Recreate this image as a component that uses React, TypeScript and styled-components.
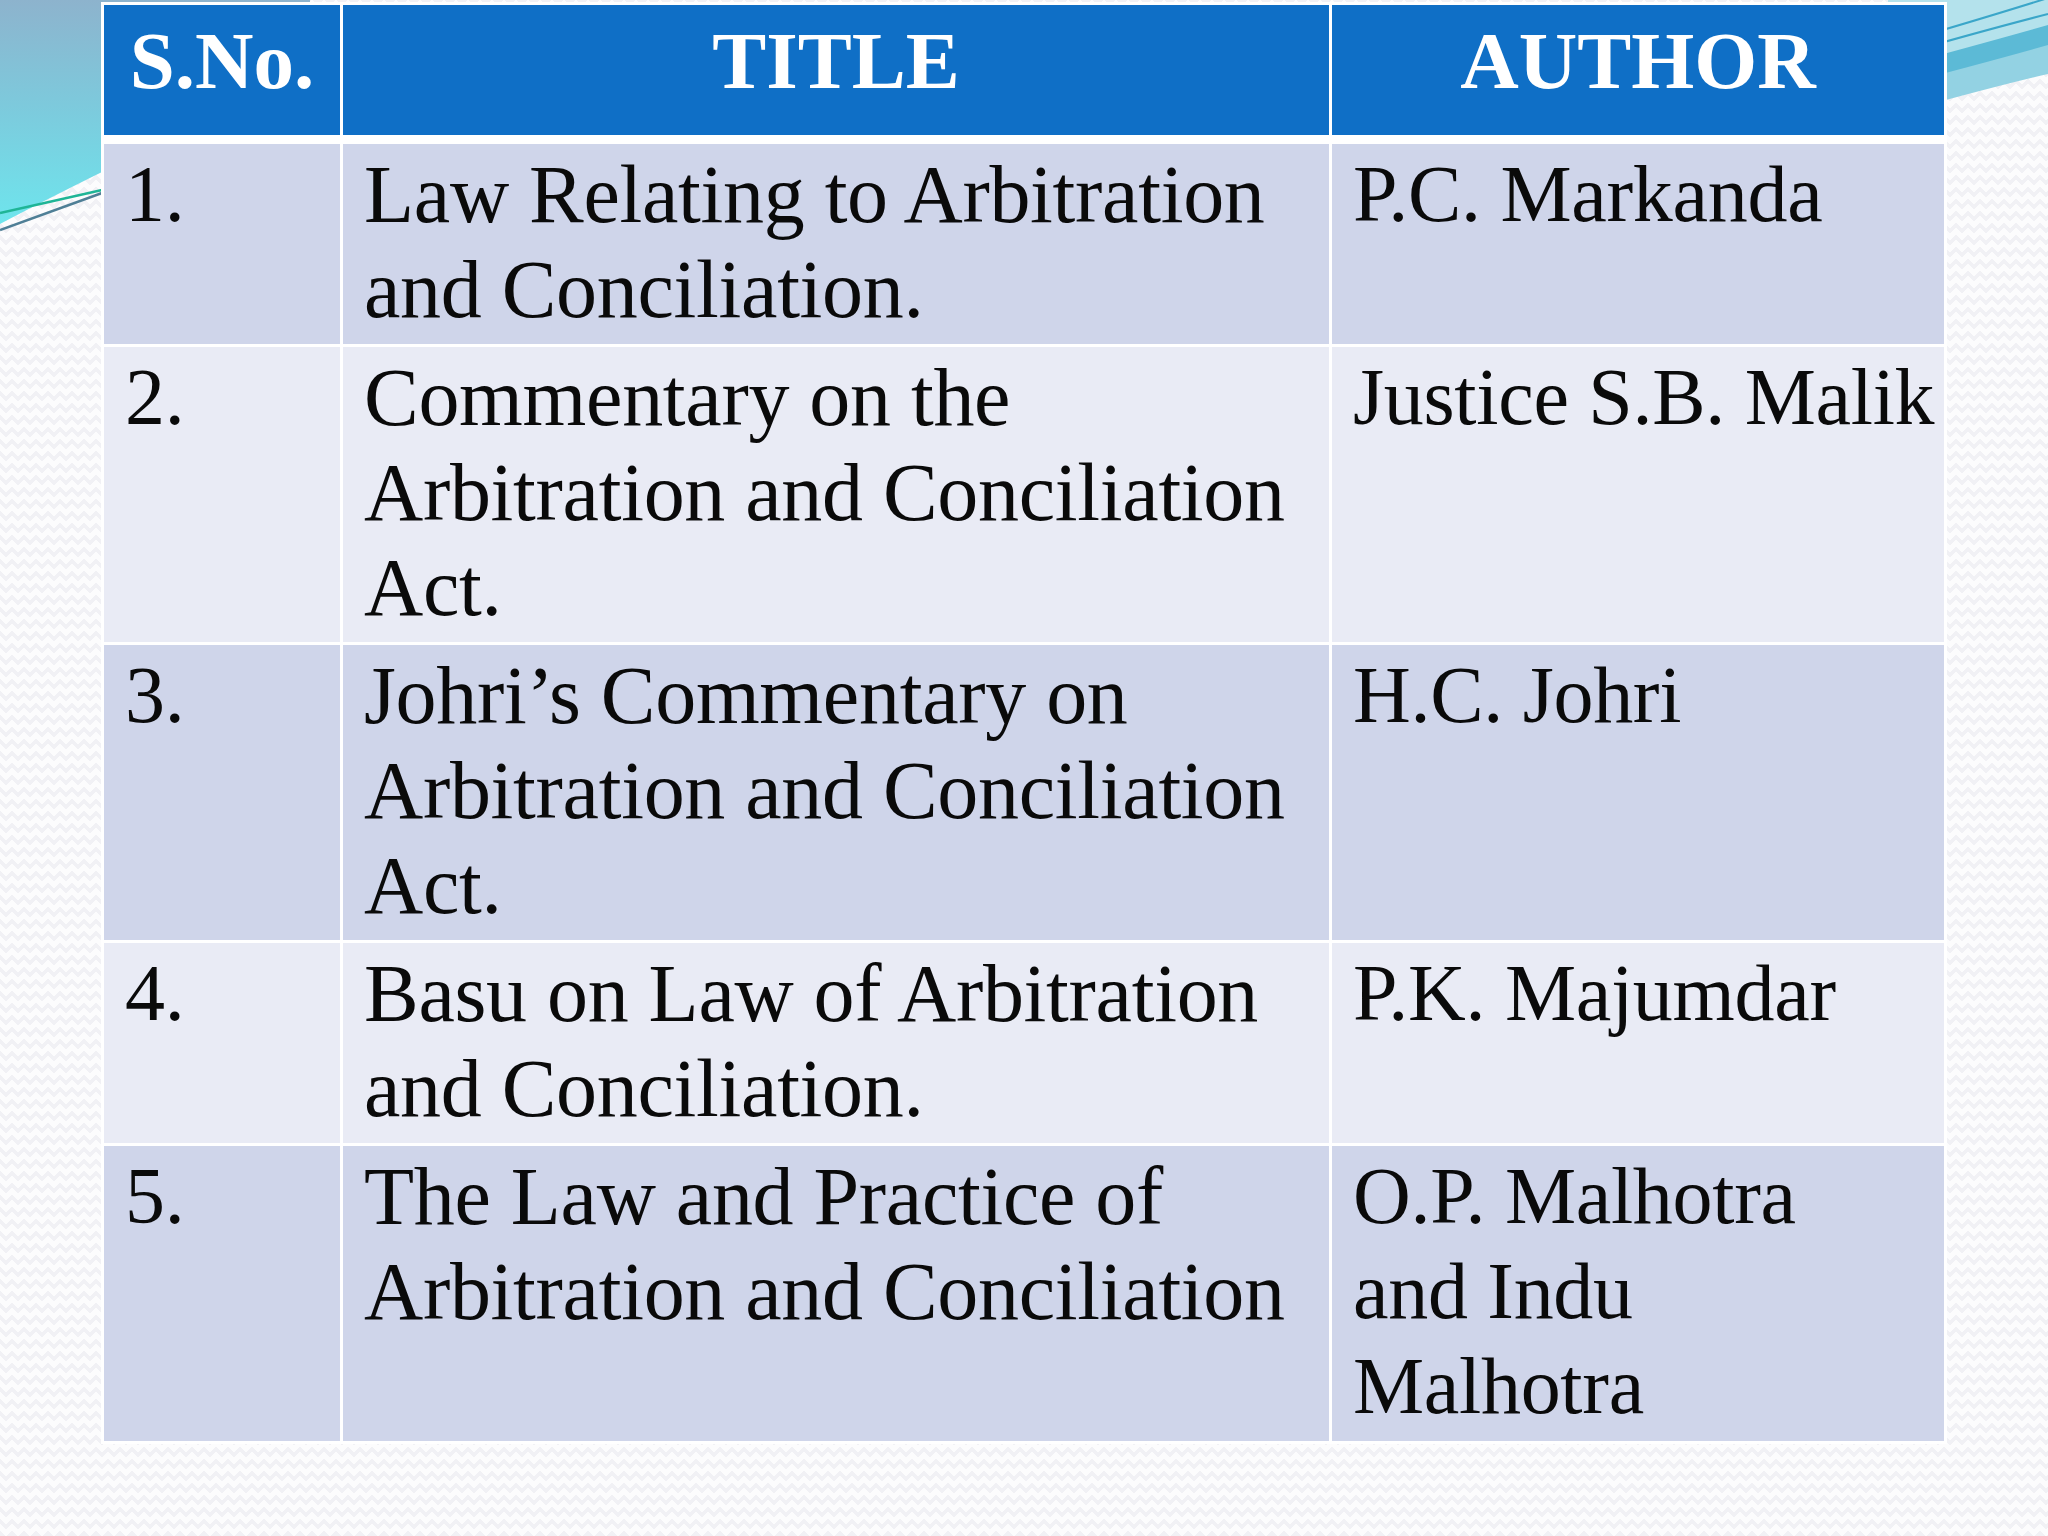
import React from 'react';
import styled, { createGlobalStyle } from 'styled-components';

type Book = {
  no: string;
  title: string;
  author: string[];
};

const books: Book[] = [
  { no: '1.', title: 'Law Relating to Arbitration and Conciliation.', author: ['P.C. Markanda'] },
  { no: '2.', title: 'Commentary on the Arbitration and Conciliation Act.', author: ['Justice S.B. Malik'] },
  { no: '3.', title: 'Johri’s Commentary on Arbitration and Conciliation Act.', author: ['H.C. Johri'] },
  { no: '4.', title: 'Basu on Law of Arbitration and Conciliation.', author: ['P.K. Majumdar'] },
  { no: '5.', title: 'The Law and Practice of Arbitration and Conciliation', author: ['O.P. Malhotra', 'and Indu', 'Malhotra'] },
];

const GlobalStyle = createGlobalStyle`
  html, body {
    margin: 0;
    padding: 0;
    background: #fbfbfd;
  }
`;

const Slide = styled.div`
  position: relative;
  width: 2048px;
  height: 1536px;
  overflow: hidden;
  background-color: #fcfcfd;
  background-image:
    linear-gradient(135deg, #f1f1f5 25%, transparent 25%),
    linear-gradient(225deg, #f1f1f5 25%, transparent 25%),
    linear-gradient(45deg, #f1f1f5 25%, transparent 25%),
    linear-gradient(315deg, #f1f1f5 25%, transparent 25%);
  background-position: 6px 0, 6px 0, 0 0, 0 0;
  background-size: 12px 12px;
  padding-top: 2px;
  box-sizing: border-box;
`;

const WaveLeft = styled.svg`
  position: absolute;
  left: 0;
  top: 0;
  width: 320px;
  height: 260px;
`;

const WaveRight = styled.svg`
  position: absolute;
  right: 0;
  top: 0;
  width: 160px;
  height: 130px;
`;

const Table = styled.div`
  position: relative;
  z-index: 1;
  margin-left: 101px;
  display: grid;
  grid-template-columns: 236px 986px 612px;
  column-gap: 3px;
  row-gap: 3px;
  padding: 3px;
  width: max-content;
  background: #ffffff;
`;

const HeadCell = styled.div`
  height: 130px;
  margin-bottom: 6px;
  box-sizing: border-box;
  padding-top: 16px;
  background: #0f6fc6;
  color: #ffffff;
  text-align: center;
  font-family: 'Liberation Serif', 'Times New Roman', serif;
  font-weight: 700;
  font-size: 81px;
  line-height: 81px;
  white-space: nowrap;
`;

const Cell = styled.div<{ $even: boolean; $nowrap?: boolean; $size?: number }>`
  background: ${(p) => (p.$even ? '#e9ebf5' : '#cfd5ea')};
  color: #0a0a0a;
  padding: 3px 8px 7px 21px;
  font-family: 'Liberation Serif', 'Times New Roman', serif;
  font-size: ${(p) => p.$size ?? 80}px;
  line-height: 95px;
  letter-spacing: -0.3px;
  white-space: ${(p) => (p.$nowrap ? 'nowrap' : 'normal')};
`;

const Line = styled.span`
  display: block;
`;

const App = () => {
  return (
    <>
      <GlobalStyle />
      <Slide>
        <WaveLeft viewBox="0 0 320 260">
          <defs>
            <linearGradient id="leftFill" x1="0" y1="0" x2="0" y2="1">
              <stop offset="0%" stopColor="#8db3cd" />
              <stop offset="50%" stopColor="#7ccbdd" />
              <stop offset="100%" stopColor="#6ee5ed" />
            </linearGradient>
          </defs>
          <path d="M0 0 H310 V70 C230 106 150 148 102 172 C62 192 30 208 0 224 Z" fill="url(#leftFill)" />
          <path d="M0 213 L102 190 L320 142" fill="none" stroke="#1fb596" strokeWidth="2.5" />
          <path d="M0 230 L102 193 L320 118" fill="none" stroke="#4f7f96" strokeWidth="2.5" />
        </WaveLeft>
        <WaveRight viewBox="0 0 160 130">
          <path d="M0 0 H160 V74 Q100 88 0 116 Z" fill="#93d2e3" />
          <path d="M0 0 H160 V45 Q100 62 0 88 Z" fill="#5cbad6" />
          <path d="M0 0 H160 V25 Q100 42 0 69 Z" fill="#b4e2ec" />
          <path d="M0 58 Q90 32 160 14" fill="none" stroke="#3aa6c9" strokeWidth="2" />
          <path d="M0 46 Q90 20 160 -2" fill="none" stroke="#3aa6c9" strokeWidth="2" />
        </WaveRight>

        <Table>
          <HeadCell>S.No.</HeadCell>
          <HeadCell>TITLE</HeadCell>
          <HeadCell>AUTHOR</HeadCell>
          {books.map((b, i) => (
            <React.Fragment key={b.no}>
              <Cell $even={i % 2 === 1}>{b.no}</Cell>
              <Cell $even={i % 2 === 1} $size={82}>
                {b.title}
              </Cell>
              <Cell $even={i % 2 === 1} $nowrap>
                {b.author.map((a) => (
                  <Line key={a}>{a}</Line>
                ))}
              </Cell>
            </React.Fragment>
          ))}
        </Table>
      </Slide>
    </>
  );
};

export default App;
